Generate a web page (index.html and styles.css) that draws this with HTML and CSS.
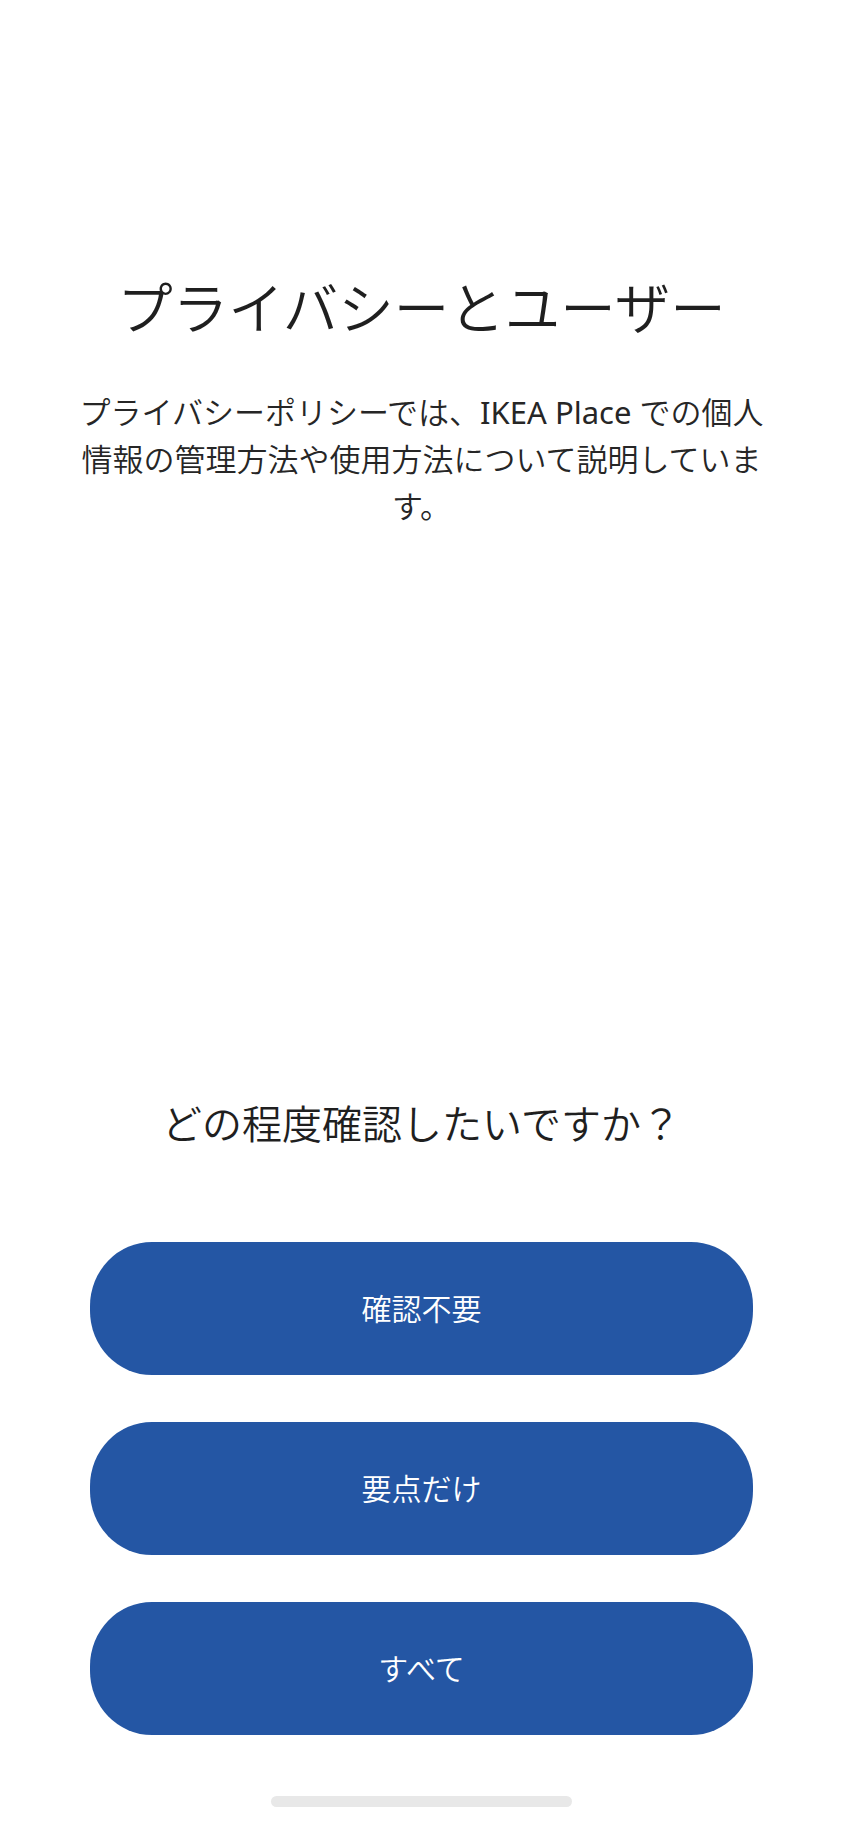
FILE: index.html
```html
<!DOCTYPE html>
<html lang="ja">
    <head>
        <meta charset="UTF-8" />
        <meta
            name="viewport"
            content="width=device-width, initial-scale=1.0"
        />
        <title>プライバシーとユーザー</title>
        <link rel="stylesheet" href="styles.css">
    </head>
    <body>
        <main class="screen">
            <section class="intro">
                <h1 class="title">プライバシーとユーザー</h1>
                <p class="lead">プライバシーポリシーでは、<span class="brand">IKEA Place</span> での個人情報の管理方法や使用方法について説明しています。</p>
            </section>
            <section class="choices">
                <h2 class="question">どの程度確認したいですか？</h2>
                <div class="options">
                    <button class="option">確認不要</button>
                    <button class="option">要点だけ</button>
                    <button class="option">すべて</button>
                </div>
            </section>
            <div class="home-bar"></div>
        </main>
    </body>
</html>
```

FILE: styles.css
```css
:root {
    background: #ffffff;
}
* {
    font-family: "Noto Sans", "Noto Sans CJK JP", sans-serif;
    font-weight: 350;
    padding: 0;
    margin: 0;
    box-sizing: border-box;
    color: #1f1f1f;
}
body {
    width: 100vw;
    height: 100vh;
}
.screen {
    display: flex;
    flex-direction: column;
    align-items: center;
    height: 100%;
    padding: 273px 0 18px;
}
.intro {
    display: flex;
    flex-direction: column;
    align-items: center;
    gap: 46px;
    width: 100%;
    padding: 0 76px;
}
.title {
    font-size: 55.5px;
    font-weight: 350;
    line-height: 70px;
    text-align: center;
}
.lead {
    font-size: 31px;
    line-height: 47px;
    text-align: center;
    color: #262626;
}
.brand {
    font-weight: 400;
    color: #262626;
}
.choices {
    margin-top: auto;
    display: flex;
    flex-direction: column;
    align-items: center;
    gap: 90px;
    width: 100%;
    padding: 0 90px;
}
.question {
    font-size: 40px;
    font-weight: 350;
    line-height: 56px;
    text-align: center;
}
.options {
    display: flex;
    flex-direction: column;
    gap: 47px;
    width: 100%;
}
.option {
    all: unset;
    box-sizing: border-box;
    display: flex;
    align-items: center;
    justify-content: center;
    height: 133px;
    padding-bottom: 3px;
    border-radius: 62px / 64px;
    background: #2456a4;
    color: #ffffff;
    font-size: 30px;
    font-weight: 350;
    cursor: pointer;
}
.home-bar {
    margin-top: 61px;
    width: 301px;
    height: 11px;
    border-radius: 6px;
    background: #e8e8e8;
}
```
